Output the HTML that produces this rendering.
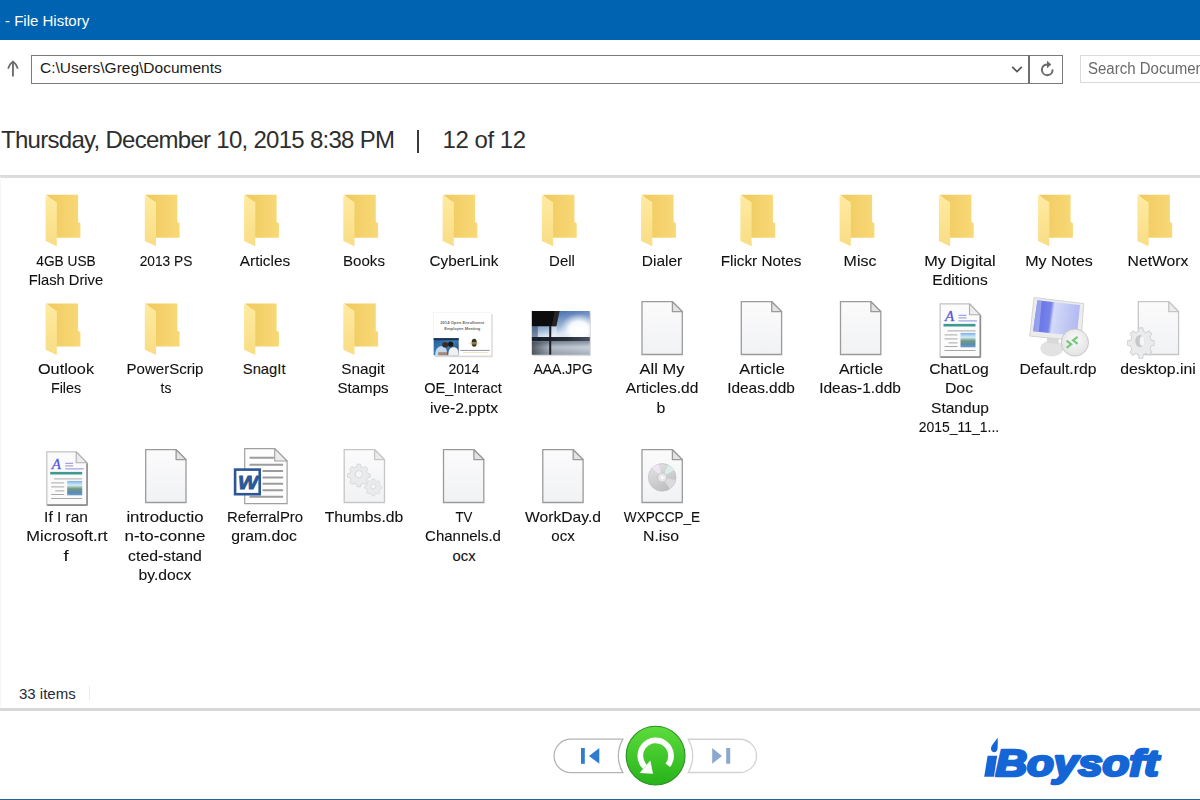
<!DOCTYPE html>
<html><head><meta charset="utf-8">
<style>
html,body{margin:0;padding:0;width:1200px;height:800px;overflow:hidden;background:#fff;}
body{position:relative;font-family:"Liberation Sans",sans-serif;color:#1a1a1a;}
.abs{position:absolute;}
#title{position:absolute;left:0;top:0;width:1200px;height:40px;background:#0063b1;}
#title span{position:absolute;left:5px;top:12.9px;font-size:15px;line-height:15px;color:#fff;white-space:pre;}
.lb{position:absolute;width:120px;text-align:center;font-size:14.8px;line-height:16px;white-space:nowrap;color:#111;transform-origin:60px 50%;-webkit-text-stroke:0.1px #111;}
svg{position:absolute;left:0;top:0;}
</style></head><body>
<div id="title"><span>- File History</span></div>

<!-- address bar -->
<div class="abs" style="left:31px;top:54.5px;width:1030px;height:27px;border:1px solid #7a7a7a;border-width:1.2px;"></div>
<div class="abs" style="left:1028px;top:55px;width:2px;height:28px;background:#6e6e6e;"></div>
<div class="abs" style="left:40px;top:60.2px;font-size:15.5px;line-height:15.5px;white-space:pre;color:#1a1a1a;">C:\Users\Greg\Documents</div>
<div class="abs" style="left:1080px;top:55px;width:130px;height:26px;border:1px solid #d9d9d9;"></div>
<div class="abs" style="left:1087.5px;top:60.6px;font-size:15.8px;line-height:16px;white-space:pre;color:#6a6a6a;transform:scaleX(0.95);transform-origin:0 50%;">Search Documents</div>

<!-- heading -->
<div class="abs" style="left:1px;top:127.9px;font-size:24px;line-height:24px;white-space:pre;color:#2e2e2e;letter-spacing:-0.72px;">Thursday, December 10, 2015 8:38 PM</div>
<div class="abs" style="left:417px;top:129.5px;width:1.7px;height:23px;background:#3a3a3a;"></div>
<div class="abs" style="left:442.5px;top:127.9px;font-size:24px;line-height:24px;white-space:pre;color:#2e2e2e;letter-spacing:-0.45px;">12 of 12</div>

<div class="abs" style="left:0;top:175px;width:1200px;height:2.5px;background:#dcdcdc;"></div>
<div class="abs" style="left:0;top:177px;width:1px;height:531px;background:#f6f6f6;"></div>

<div class="lb" style="left:6.06px;top:252.67px;transform:scaleX(0.9246)">4GB USB</div>
<div class="lb" style="left:5.95px;top:271.77px;transform:scaleX(0.9932)">Flash Drive</div>
<div class="lb" style="left:106.06px;top:252.67px;transform:scaleX(0.9286)">2013 PS</div>
<div class="lb" style="left:204.94px;top:252.67px;transform:scaleX(1.0417)">Articles</div>
<div class="lb" style="left:304.40px;top:252.67px;transform:scaleX(1.0188)">Books</div>
<div class="lb" style="left:403.52px;top:252.67px;transform:scaleX(1.0341)">CyberLink</div>
<div class="lb" style="left:502.37px;top:252.67px;transform:scaleX(1.0104)">Dell</div>
<div class="lb" style="left:601.70px;top:252.67px;transform:scaleX(1.0473)">Dialer</div>
<div class="lb" style="left:701.21px;top:252.67px;transform:scaleX(1.0325)">Flickr Notes</div>
<div class="lb" style="left:800.21px;top:252.67px;transform:scaleX(1.0776)">Misc</div>
<div class="lb" style="left:899.76px;top:252.67px;transform:scaleX(1.0992)">My Digital</div>
<div class="lb" style="left:899.53px;top:271.77px;transform:scaleX(1.0539)">Editions</div>
<div class="lb" style="left:998.53px;top:252.67px;transform:scaleX(1.0820)">My Notes</div>
<div class="lb" style="left:1098.14px;top:252.67px;transform:scaleX(1.0625)">NetWorx</div>
<div class="lb" style="left:5.92px;top:361.37px;transform:scaleX(1.1000)">Outlook</div>
<div class="lb" style="left:5.96px;top:380.47px;transform:scaleX(0.9667)">Files</div>
<div class="lb" style="left:105.18px;top:361.37px;transform:scaleX(1.0167)">PowerScrip</div>
<div class="lb" style="left:105.68px;top:380.47px;transform:scaleX(0.9375)">ts</div>
<div class="lb" style="left:204.17px;top:361.37px">SnagIt</div>
<div class="lb" style="left:303.00px;top:361.37px;transform:scaleX(1.0366)">Snagit</div>
<div class="lb" style="left:303.02px;top:380.47px;transform:scaleX(1.0204)">Stamps</div>
<div class="lb" style="left:403.88px;top:361.37px;transform:scaleX(0.9375)">2014</div>
<div class="lb" style="left:403.40px;top:380.47px;transform:scaleX(0.9810)">OE_Interact</div>
<div class="lb" style="left:403.62px;top:399.57px;transform:scaleX(1.0635)">ive-2.pptx</div>
<div class="lb" style="left:503.10px;top:361.37px;transform:scaleX(0.9476)">AAA.JPG</div>
<div class="lb" style="left:602.09px;top:361.37px;transform:scaleX(1.1125)">All My</div>
<div class="lb" style="left:602.38px;top:380.47px;transform:scaleX(1.0507)">Articles.dd</div>
<div class="lb" style="left:601.06px;top:399.57px;transform:scaleX(1.0714)">b</div>
<div class="lb" style="left:701.87px;top:361.37px;transform:scaleX(1.1062)">Article</div>
<div class="lb" style="left:700.71px;top:380.47px;transform:scaleX(1.0397)">Ideas.ddb</div>
<div class="lb" style="left:801.09px;top:361.37px;transform:scaleX(1.0732)">Article</div>
<div class="lb" style="left:799.86px;top:380.47px;transform:scaleX(1.0447)">Ideas-1.ddb</div>
<div class="lb" style="left:899.19px;top:361.37px;transform:scaleX(1.0648)">ChatLog</div>
<div class="lb" style="left:898.53px;top:380.47px;transform:scaleX(1.0700)">Doc</div>
<div class="lb" style="left:899.56px;top:399.57px;transform:scaleX(1.0509)">Standup</div>
<div class="lb" style="left:899.07px;top:418.67px;transform:scaleX(0.9435)">2015_11_1...</div>
<div class="lb" style="left:998.29px;top:361.37px;transform:scaleX(1.0634)">Default.rdp</div>
<div class="lb" style="left:1098.30px;top:361.37px;transform:scaleX(1.0688)">desktop.ini</div>
<div class="lb" style="left:5.54px;top:509.37px;transform:scaleX(1.0425)">If I ran</div>
<div class="lb" style="left:6.67px;top:528.47px;transform:scaleX(1.1111)">Microsoft.rt</div>
<div class="lb" style="left:6.12px;top:547.57px;transform:scaleX(1.2500)">f</div>
<div class="lb" style="left:104.90px;top:509.37px;transform:scaleX(1.1313)">introductio</div>
<div class="lb" style="left:104.75px;top:528.47px;transform:scaleX(1.1435)">n-to-conne</div>
<div class="lb" style="left:105.06px;top:547.57px;transform:scaleX(1.0676)">cted-stand</div>
<div class="lb" style="left:105.23px;top:566.67px;transform:scaleX(1.0612)">by.docx</div>
<div class="lb" style="left:204.67px;top:509.37px;transform:scaleX(1.0068)">ReferralPro</div>
<div class="lb" style="left:204.41px;top:528.47px;transform:scaleX(1.0656)">gram.doc</div>
<div class="lb" style="left:304.05px;top:509.37px;transform:scaleX(1.0616)">Thumbs.db</div>
<div class="lb" style="left:403.68px;top:509.37px;transform:scaleX(0.8947)">TV</div>
<div class="lb" style="left:403.14px;top:528.47px;transform:scaleX(1.0135)">Channels.d</div>
<div class="lb" style="left:404.14px;top:547.57px">ocx</div>
<div class="lb" style="left:503.00px;top:509.37px;transform:scaleX(1.0563)">WorkDay.d</div>
<div class="lb" style="left:502.74px;top:528.47px;transform:scaleX(1.0227)">ocx</div>
<div class="lb" style="left:602.21px;top:509.37px;transform:scaleX(0.9187)">WXPCCP_E</div>
<div class="lb" style="left:601.48px;top:528.47px;transform:scaleX(1.0703)">N.iso</div>

<div class="abs" style="left:19px;top:686.1px;font-size:15px;line-height:15px;white-space:pre;color:#1e2a3a;">33 items</div>
<div class="abs" style="left:89px;top:686px;width:1px;height:14px;background:#ececec;"></div>
<div class="abs" style="left:0;top:708px;width:1200px;height:2.5px;background:#d8d8d8;"></div>
<div class="abs" style="left:0;top:798.5px;width:1200px;height:1.5px;background:#2a6492;"></div>

<svg width="1200" height="800" viewBox="0 0 1200 800">
<defs><linearGradient id="gbtn" x1="0" y1="0" x2="0" y2="1"><stop offset="0" stop-color="#5ddc3c"/><stop offset="1" stop-color="#27b31a"/></linearGradient></defs>
<defs>
<filter id="soft" x="-5%" y="-5%" width="110%" height="110%"><feGaussianBlur stdDeviation="0.55"/></filter>
<linearGradient id="fback" x1="0" y1="0" x2="1" y2="0"><stop offset="0" stop-color="#f0c95e"/><stop offset="1" stop-color="#f8d977"/></linearGradient>
<linearGradient id="fflap" x1="0" y1="0" x2="0" y2="1"><stop offset="0" stop-color="#feeaa0"/><stop offset="1" stop-color="#f9dd85"/></linearGradient>
<linearGradient id="docg" x1="0" y1="0" x2="0" y2="1"><stop offset="0" stop-color="#fbfbfc"/><stop offset="1" stop-color="#f1f2f4"/></linearGradient>
<g id="folder">
 <path d="M0,-0.2 H32 V27.2 L34.3,28.4 V42.9 H10 V8 Z" fill="url(#fback)"/>
 <path d="M-0.5,0.3 L10.7,7.4 V51.4 L-0.5,46.2 Z" fill="url(#fflap)"/>
</g>
<g id="doc">
 <path d="M0.6,0.6 H31 L40.9,10.5 V53.4 H0.6 Z" fill="url(#docg)" stroke="#9b9b9b" stroke-width="1.3"/>
 <path d="M31,0.6 V10.5 H40.9 Z" fill="#e3e3e5" stroke="#9b9b9b" stroke-width="1.3" stroke-linejoin="round"/>
</g>
<g id="docl">
 <path d="M0.6,0.6 H31 L40.9,10.5 V53.4 H0.6 Z" fill="url(#docg)" stroke="#c6c6c6" stroke-width="1.3"/>
 <path d="M31,0.6 V10.5 H40.9 Z" fill="#ececee" stroke="#c6c6c6" stroke-width="1.3" stroke-linejoin="round"/>
</g>
<linearGradient id="cdlin" x1="0.2" y1="0" x2="0.7" y2="1"><stop offset="0" stop-color="#e2e2e4"/><stop offset="0.5" stop-color="#d0d0d2"/><stop offset="1" stop-color="#bcbcbe"/></linearGradient>
<g id="iso">
 <use href="#doc"/>
 <circle cx="20.8" cy="28.3" r="13.8" fill="url(#cdlin)" stroke="#c4c4c4" stroke-width="0.8"/>
 <g filter="url(#soft)">
 <path d="M20.8,28.3 L10.5,19 A13.8,13.8 0 0 1 17,15 Z" fill="#f2e6f4" opacity="0.9"/>
 <path d="M20.8,28.3 L27,16 A13.8,13.8 0 0 1 32.5,21 Z" fill="#dcf2ec" opacity="0.9"/>
 <path d="M20.8,28.3 L34,31 A13.8,13.8 0 0 1 28.5,40 Z" fill="#e4e4e6" opacity="0.7"/>
 </g>
 <circle cx="20.8" cy="28.3" r="4.6" fill="#e8e8ea" stroke="#cacaca" stroke-width="1.2"/>
 <circle cx="20.8" cy="28.3" r="1.5" fill="#fff"/>
</g>
<g id="gear">
 <path d="M-1.6,-10 h3.2 l0.6,2.6 l2.3,1 l2.3,-1.4 l2.3,2.3 l-1.4,2.3 l1,2.3 l2.6,0.6 v3.2 l-2.6,0.6 l-1,2.3 l1.4,2.3 l-2.3,2.3 l-2.3,-1.4 l-2.3,1 l-0.6,2.6 h-3.2 l-0.6,-2.6 l-2.3,-1 l-2.3,1.4 l-2.3,-2.3 l1.4,-2.3 l-1,-2.3 l-2.6,-0.6 v-3.2 l2.6,-0.6 l1,-2.3 l-1.4,-2.3 l2.3,-2.3 l2.3,1.4 l2.3,-1 Z" fill="#e9ebed" stroke="#d0d2d4" stroke-width="0.8"/>
</g>
<g id="thumbs">
 <use href="#docl"/>
 <use href="#gear" transform="translate(15.2,25.1)"/>
 <circle cx="15.2" cy="25.1" r="3.6" fill="#f6f6f7" stroke="#d0d2d4" stroke-width="0.8"/>
 <use href="#gear" transform="translate(29.7,37.3) scale(0.75)"/>
 <circle cx="29.7" cy="37.3" r="2.6" fill="#f6f6f7" stroke="#d0d2d4" stroke-width="0.8"/>
</g>
<g id="ini">
 <use href="#docl"/>
 <use href="#gear" transform="translate(3.2,40.2) scale(1.18,1.34)"/>
 <ellipse cx="2.2" cy="40" rx="4.6" ry="6.2" fill="#c6c8cb"/>
 <ellipse cx="4.4" cy="40" rx="2.4" ry="4.8" fill="#f6f6f7"/>
</g>
<linearGradient id="rtfimg" x1="0" y1="0" x2="0" y2="1"><stop offset="0" stop-color="#7ab2e4"/><stop offset="0.3" stop-color="#d4ecf8"/><stop offset="0.55" stop-color="#6e9a7e"/><stop offset="0.8" stop-color="#5c8cb4"/><stop offset="1" stop-color="#6a9ac4"/></linearGradient>
<g id="rtf">
 <path d="M0.6,0.6 H30 L40.7,11.5 V53.6 H0.6 Z" fill="#fbfbfb" stroke="#c2c2c2" stroke-width="1.2"/>
 <path d="M1,53.8 H41.2 M40.9,12 V53.8" stroke="#8e8e8e" stroke-width="1.6" fill="none"/>
 <path d="M30,0.6 V11.5 H40.7 Z" fill="#ededed" stroke="#b0b0b0" stroke-width="1.1" stroke-linejoin="round"/>
 <text x="5.5" y="18.2" font-family="Liberation Serif" font-style="italic" font-size="15" fill="#5050d4" stroke="#6a6ae0" stroke-width="0.3">A</text>
 <path d="M19,12 H27 M19,14.6 H27 M19,17.6 H37.5" stroke="#8e8ee2" stroke-width="1"/>
 <rect x="4" y="20.6" width="32" height="2.6" fill="#3e9a8e"/>
 <path d="M8,27.6 H36 M5,31.6 H18 M5,35.6 H18 M9,39.6 H18 M5,43.2 H18 M5,47.2 H36" stroke="#a8a8a8" stroke-width="1"/>
 <rect x="21" y="29.6" width="15" height="14.4" fill="url(#rtfimg)"/>
</g>
<g id="word">
 <path d="M10.8,0.6 H40.8 L53.2,13 V55.6 H10.8 Z" fill="#fdfdfd" stroke="#a0a0a0" stroke-width="1.2"/>
 <path d="M40.8,0.6 V13 H53.2 Z" fill="#ececec" stroke="#a0a0a0" stroke-width="1.1" stroke-linejoin="round"/>
 <path d="M15.6,9.8 H40 M15.6,16.8 H49.2 M28.6,23 H49.2 M28.6,29.5 H49.2 M28.6,35.8 H49.2 M28.6,42.2 H49.2 M15.6,48.8 H49.2" stroke="#9c9c9c" stroke-width="2"/>
 <rect x="1.2" y="21.6" width="24.6" height="24.6" fill="#fff" stroke="#2b5797" stroke-width="2.6"/>
 <text x="4" y="40.6" font-family="Liberation Sans" font-style="italic" font-weight="bold" font-size="19" fill="#2b5797" stroke="#2b5797" stroke-width="0.9" textLength="20" lengthAdjust="spacingAndGlyphs">W</text>
</g>
<linearGradient id="pphoto" x1="0" y1="0" x2="1" y2="1"><stop offset="0" stop-color="#1e5c9a"/><stop offset="0.5" stop-color="#3b7fb8"/><stop offset="1" stop-color="#203a60"/></linearGradient>
<g id="pptx">
 <rect x="1.5" y="1.5" width="58" height="43" fill="#c8c8c8" opacity="0.7"/>
 <rect x="0" y="0" width="58" height="43" fill="#fff" stroke="#ececec" stroke-width="0.5"/>
 <text x="29" y="11" text-anchor="middle" font-family="Liberation Sans" font-weight="bold" font-size="4.2" fill="#6a6a6a" textLength="44" lengthAdjust="spacingAndGlyphs">2014 Open Enrollment</text>
 <text x="29" y="17" text-anchor="middle" font-family="Liberation Sans" font-weight="bold" font-size="4.2" fill="#6a6a6a" textLength="36" lengthAdjust="spacingAndGlyphs">Employee Meeting</text>
 <g filter="url(#soft)">
 <rect x="0.5" y="25.5" width="25" height="17" fill="url(#pphoto)"/>
 <rect x="0.5" y="25.5" width="25" height="2" fill="#1a3050"/>
 <path d="M2,42.5 C2,36 5,33.5 8.5,33.5 C12,33.5 14,36 14,42.5 Z" fill="#c8d8ec"/>
 <ellipse cx="12" cy="32" rx="3" ry="2.8" fill="#3a2a22"/>
 <ellipse cx="17.5" cy="31.5" rx="2.6" ry="2.6" fill="#1a1410"/>
 <path d="M15,42.5 C15,37 17,34.5 20.5,34.5 C24,34.5 25.5,37 25.5,42.5 Z" fill="#f0f0f0"/>
 <rect x="5" y="39.5" width="10" height="3" fill="#8a5030" opacity="0.6"/>
 </g>
 <ellipse cx="41" cy="30" rx="2.6" ry="4" fill="#3a3020"/>
 <ellipse cx="41" cy="30.5" rx="5.5" ry="1.3" fill="#e0d090" opacity="0.5"/>
 <path d="M27,37.7 H56.5" stroke="#8a8a8a" stroke-width="0.9"/>
 <path d="M30,39.8 H55" stroke="#eadca8" stroke-width="0.7"/>
</g>
<linearGradient id="jsky" x1="0" y1="0" x2="0.25" y2="1"><stop offset="0" stop-color="#24549c"/><stop offset="0.45" stop-color="#9db6d8"/><stop offset="0.6" stop-color="#dfe8f2"/><stop offset="1" stop-color="#e8eef4"/></linearGradient>
<radialGradient id="jsun" cx="0.5" cy="0.5" r="0.5"><stop offset="0" stop-color="#ffffff"/><stop offset="0.5" stop-color="#fbfdff" stop-opacity="0.95"/><stop offset="1" stop-color="#d8e4f0" stop-opacity="0"/></radialGradient>
<linearGradient id="jground" x1="0" y1="0" x2="0" y2="1"><stop offset="0" stop-color="#7a889a"/><stop offset="0.4" stop-color="#c4ccd6"/><stop offset="1" stop-color="#98a4b2"/></linearGradient>
<linearGradient id="jhor" x1="0" y1="0" x2="1" y2="0"><stop offset="0" stop-color="#141a22"/><stop offset="0.6" stop-color="#262e38"/><stop offset="1" stop-color="#4a5260"/></linearGradient>
<linearGradient id="jgl" x1="0" y1="0" x2="1" y2="0"><stop offset="0" stop-color="#303844" stop-opacity="0.8"/><stop offset="0.35" stop-color="#303844" stop-opacity="0.1"/><stop offset="1" stop-color="#fff" stop-opacity="0.1"/></linearGradient>
<clipPath id="jclip"><rect x="0" y="0" width="58" height="43.7"/></clipPath>
<g id="jpg">
 <rect x="1.2" y="1.5" width="58" height="43.5" fill="#c4c4c4" opacity="0.6"/>
 <g clip-path="url(#jclip)"><g filter="url(#soft)">
 <rect x="-1" y="-1" width="60" height="46" fill="url(#jsky)"/>
 <ellipse cx="47" cy="18.5" rx="19" ry="16" fill="url(#jsun)"/>
 <rect x="20" y="14" width="5" height="13" fill="#f0f4f8" opacity="0.5"/>
 <path d="M-1,26 H59 V30.4 H-1 Z" fill="url(#jhor)"/>
 <rect x="-1" y="30.4" width="60" height="14" fill="url(#jground)"/>
 <rect x="-1" y="30.4" width="60" height="14" fill="url(#jgl)"/>
 <path d="M-1,-1 H27.9 L24.5,15.2 H-1 Z" fill="#0a0a0c"/>
 <path d="M23,-1 H27.9 L24.5,15.2 H20 Z" fill="#3a3a40" opacity="0.6"/>
 <rect x="17.4" y="15" width="2" height="29" fill="#1a1e24"/>
 <path d="M-1,15 H6 V30 H-1 Z" fill="#1a2a48" opacity="0.45"/>
 </g></g>
</g>
<linearGradient id="scr" x1="0" y1="0" x2="1" y2="0.1"><stop offset="0" stop-color="#8892ec"/><stop offset="0.1" stop-color="#6472e4"/><stop offset="0.4" stop-color="#7884ea"/><stop offset="0.47" stop-color="#d4daf8"/><stop offset="1" stop-color="#b2baf2"/></linearGradient>
<radialGradient id="badge" cx="0.5" cy="0.4" r="0.6"><stop offset="0" stop-color="#fafafa"/><stop offset="1" stop-color="#e2e2e2"/></radialGradient>
<g id="rdp">
 <ellipse cx="22.1" cy="51.4" rx="11.5" ry="8" fill="#e2e2e2"/>
 <path d="M17,40 L29,41 L28.5,47 L17.5,46 Z" fill="#d8d8d8"/>
 <path d="M4.2,0.5 L54,6.6 L51,44 L0,39 Z" fill="#ececec" stroke="#d4d4d4" stroke-width="1"/>
 <path d="M7.6,3.3 L50.2,8 L47,39 L3.2,34.3 Z" fill="url(#scr)"/>
 <path d="M3.2,34.3 L7.6,3.3 L12,3.8 L9,35 Z" fill="#b4bcf2" opacity="0.6"/>
 <circle cx="45.1" cy="45.5" r="13.6" fill="url(#badge)" stroke="#c8c8c8" stroke-width="1"/>
 <path d="M36.8,43.6 L41.3,47.2 L36.8,50.8 M47.8,39.8 L43.3,43.3 L47.8,46.8" fill="none" stroke="#7cc882" stroke-width="2.3"/>
</g>
</defs>

<!-- up arrow -->
<path d="M12.95,76.6 V63" fill="none" stroke="#6e6e6e" stroke-width="1.9"/><path d="M8.1,68.6 Q10,63.6 12.95,61.6 Q15.9,63.6 17.8,68.6" fill="none" stroke="#6e6e6e" stroke-width="1.8"/>
<!-- chevron -->
<path d="M1012.2,66.8 L1017,71.6 L1021.8,66.8" fill="none" stroke="#555" stroke-width="1.7"/>
<!-- refresh -->
<path d="M1052.5,69.3 A5.3,5.3 0 1 1 1045.6,64.8 L1047.6,64.6" fill="none" stroke="#6a6a6a" stroke-width="2"/>
<path d="M1047,60.8 L1051.3,64.6 L1047,68.3 Z" fill="#6a6a6a"/>
<!-- bottom nav -->
<path d="M570.85,739.2 H622.9 A33,33 0 0 0 622.9,772.7 H570.85 A16.75,16.75 0 0 1 570.85,739.2 Z" fill="#fff" stroke="#b4b4b8" stroke-width="1.3"/>
<path d="M688.25,739.25 H739.9 A16.6,16.6 0 0 1 739.9,772.5 H688.25 A33,33 0 0 0 688.25,739.25 Z" fill="#fff" stroke="#d2d2d4" stroke-width="1.3"/>
<rect x="581" y="748" width="3.8" height="15.8" fill="#2f7dd1"/>
<path d="M589,755.9 L599.3,748 V763.8 Z" fill="#2f7dd1"/>
<path d="M712.2,748 L722,755.9 L712.2,763.75 Z" fill="#8ba8cf"/>
<rect x="726.2" y="748" width="4" height="15.75" fill="#8ba8cf"/>
<circle cx="655.6" cy="755.6" r="29.4" fill="url(#gbtn)" stroke="#2b8e25" stroke-width="1.1"/>
<path d="M667.8,765.3 A15.4,15.4 0 1 0 644.8,766.7" fill="none" stroke="#fff" stroke-width="5.7"/>
<path d="M639.6,773 L653,773.8 L650.3,760.4 Z" fill="#fff"/>
<text x="995.5" y="775.6" font-family="Liberation Sans" font-weight="bold" font-style="italic" font-size="36.5" fill="#1466d6" stroke="#1466d6" stroke-width="2.7" stroke-linejoin="round" textLength="163" lengthAdjust="spacingAndGlyphs">Boysoft</text>
<path d="M984.2,776.7 L987.6,755.8 H997.2 L993.9,776.7 Z" fill="#1466d6"/>
<path d="M997.6,737.6 C996,741 991,745 991,748.8 C991,751.2 992.6,752.2 994.2,752.2 C996.4,752.2 997.4,750.4 997.6,748 C997.9,744 997.8,740 997.6,737.6 Z" fill="#1466d6"/>
<use href="#folder" x="46.1" y="194.9"/>
<use href="#folder" x="145.3" y="194.9"/>
<use href="#folder" x="244.6" y="194.9"/>
<use href="#folder" x="343.8" y="194.9"/>
<use href="#folder" x="443.1" y="194.9"/>
<use href="#folder" x="542.4" y="194.9"/>
<use href="#folder" x="641.6" y="194.9"/>
<use href="#folder" x="740.9" y="194.9"/>
<use href="#folder" x="840.1" y="194.9"/>
<use href="#folder" x="939.4" y="194.9"/>
<use href="#folder" x="1038.6" y="194.9"/>
<use href="#folder" x="1137.9" y="194.9"/>
<use href="#folder" x="46.1" y="303.6"/>
<use href="#folder" x="145.3" y="303.6"/>
<use href="#folder" x="244.6" y="303.6"/>
<use href="#folder" x="343.8" y="303.6"/>
<use href="#pptx" x="433.2" y="312.7"/>
<use href="#jpg" x="531.8" y="311.1"/>
<use href="#doc" x="641.4" y="301.1"/>
<use href="#doc" x="740.7" y="301.1"/>
<use href="#doc" x="839.9" y="301.1"/>
<use href="#rtf" x="939.5" y="303.3"/>
<use href="#rdp" x="1029.8" y="297.0"/>
<use href="#ini" x="1137.7" y="301.1"/>
<use href="#rtf" x="46.2" y="451.3"/>
<use href="#doc" x="145.1" y="449.1"/>
<use href="#word" x="233.9" y="448.0"/>
<use href="#thumbs" x="343.6" y="449.1"/>
<use href="#doc" x="442.9" y="449.1"/>
<use href="#doc" x="542.2" y="449.1"/>
<use href="#iso" x="641.4" y="449.1"/>
</svg>
</body></html>
